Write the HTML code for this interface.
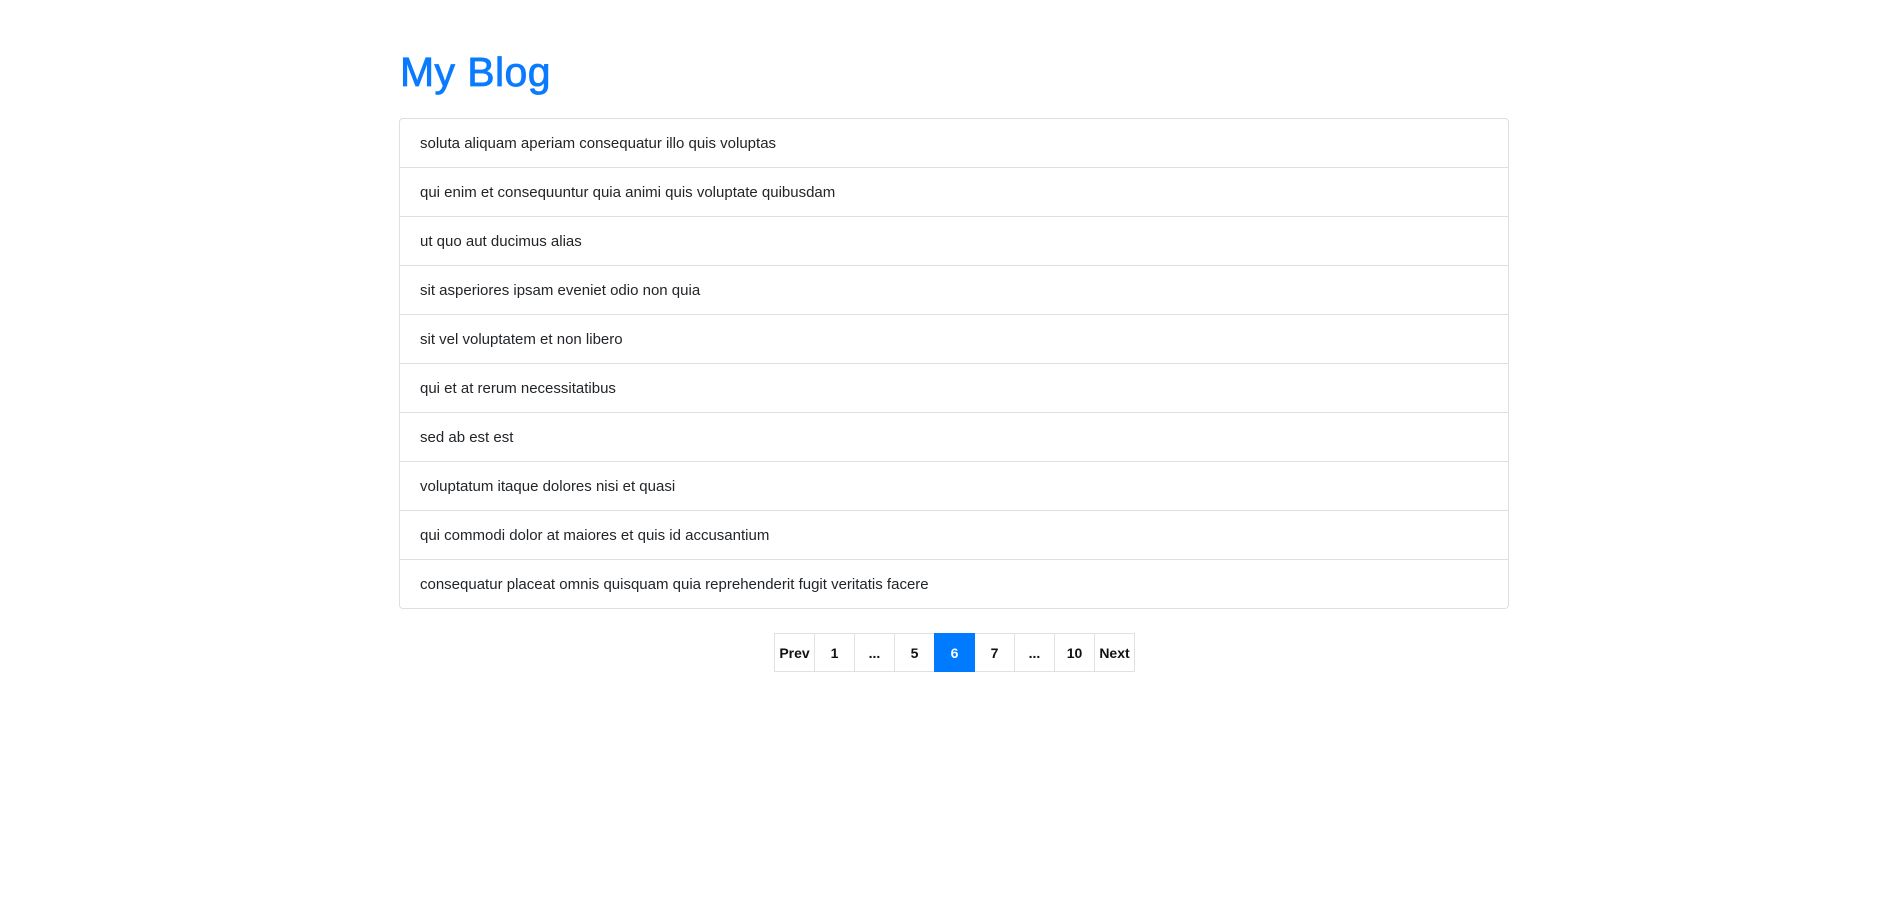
<!DOCTYPE html>
<html><head><meta charset="utf-8"><style>
body{margin:0;width:1896px;height:918px;background:#fff;font-family:"Liberation Sans",sans-serif;position:relative;overflow:hidden}
h1{position:absolute;left:400px;top:48px;margin:0;font-size:41px;line-height:48px;font-weight:normal;-webkit-text-stroke:0.8px #0a7bff;color:#0a7bff;letter-spacing:0.4px}
ul{position:absolute;left:399px;top:118px;width:1108px;margin:0;padding:0;list-style:none;border:1px solid #dfdfdf;border-radius:4px}
li{height:48px;line-height:50px;padding:0 20px;font-size:15px;color:#212529;border-top:1px solid #dfdfdf}
li:first-child{border-top:none;height:48px}
.pg{position:absolute;left:774px;top:633px;display:flex}
.pg span{width:39px;height:37px;border:1px solid #dee2e6;margin-left:-1px;display:flex;align-items:center;justify-content:center;font-size:14px;font-weight:bold;color:#111}
.pg span:first-child{margin-left:0}
.pg span.a{background:#007bff;color:#fff;border-color:#007bff;position:relative}
</style></head><body>
<h1>My Blog</h1>
<ul>
<li>soluta aliquam aperiam consequatur illo quis voluptas</li>
<li>qui enim et consequuntur quia animi quis voluptate quibusdam</li>
<li>ut quo aut ducimus alias</li>
<li>sit asperiores ipsam eveniet odio non quia</li>
<li>sit vel voluptatem et non libero</li>
<li>qui et at rerum necessitatibus</li>
<li>sed ab est est</li>
<li>voluptatum itaque dolores nisi et quasi</li>
<li>qui commodi dolor at maiores et quis id accusantium</li>
<li>consequatur placeat omnis quisquam quia reprehenderit fugit veritatis facere</li>
</ul>
<div class="pg"><span>Prev</span><span>1</span><span>...</span><span>5</span><span class="a">6</span><span>7</span><span>...</span><span>10</span><span>Next</span></div>
</body></html>
